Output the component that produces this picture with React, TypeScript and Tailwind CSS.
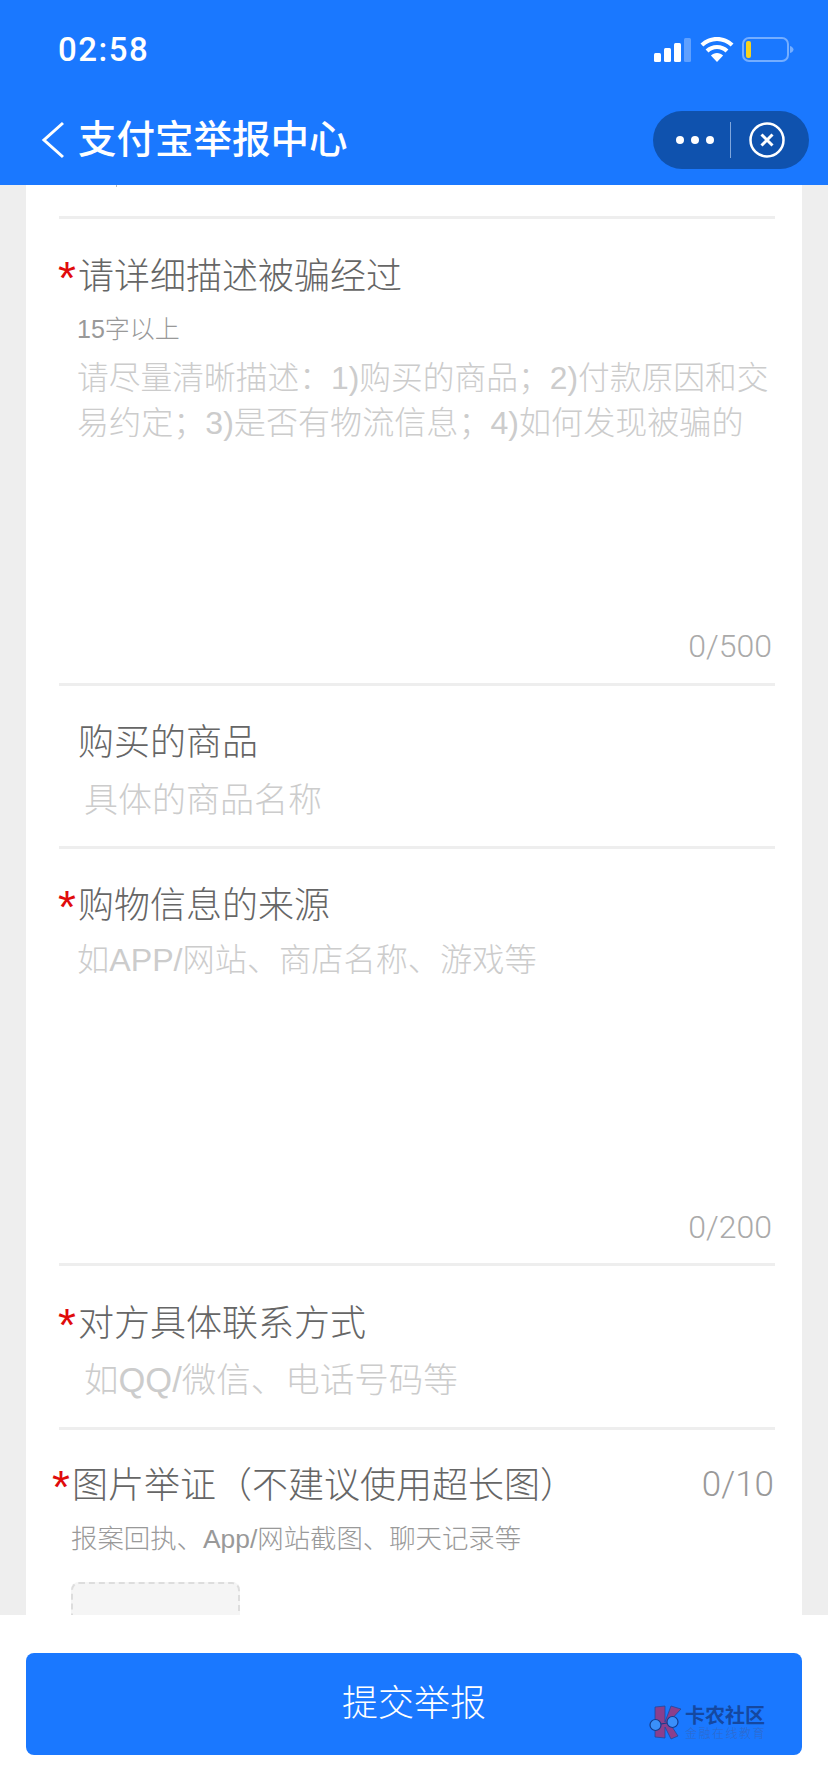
import React from "react";

const FONT = "font-['Liberation_Sans','Noto_Sans_CJK_SC',sans-serif]";

const Divider = () => <div className="h-[3px] bg-[#eeeeee]" />;

const Title: React.FC<{ text: string; required?: boolean }> = ({ text, required }) => (
  <h2 className="flex h-[44px] pl-[19px] text-[36px] leading-[44px] font-light text-[#666666]">
    <span className="relative">
      {required && <span className="absolute left-[-20px] top-[1px] text-[46px] leading-[44px] text-[#e00b0b]">*</span>}
      {text}
    </span>
  </h2>
);

const Counter: React.FC<{ text: string }> = ({ text }) => (
  <div className="pr-[3px] text-right font-['Roboto'] text-[32px] leading-[36px] font-light text-[#aaaaaa]">{text}</div>
);

const StatusIcons = () => (
  <div className="flex items-center">
    <svg width="38" height="24" viewBox="0 0 38 24" className="mr-[8px]">
      <rect x="0" y="15" width="7" height="9" rx="1.5" fill="#fff" />
      <rect x="10" y="10" width="7" height="14" rx="1.5" fill="#fff" />
      <rect x="20" y="5" width="7" height="19" rx="1.5" fill="#fff" />
      <rect x="30" y="0" width="7" height="24" rx="1.5" fill="#fff" fillOpacity="0.3" />
    </svg>
    <svg width="34" height="25" viewBox="0 0 34 25" className="mr-[8px]" fill="#fff">
      <path d="M17 0C10.6 0 4.8 2.5 .5 6.6l2.8 2.9C6.9 6.1 11.7 4 17 4s10.1 2.1 13.7 5.5l2.8-2.9C29.2 2.5 23.4 0 17 0z" />
      <path d="M17 8c-4.4 0-8.4 1.7-11.4 4.5l2.9 2.9C10.7 13.3 13.7 12 17 12s6.3 1.3 8.5 3.4l2.9-2.9C25.4 9.7 21.4 8 17 8z" />
      <path d="M17 16c-2.4 0-4.5.9-6.1 2.4L17 25l6.1-6.6C21.5 16.9 19.4 16 17 16z" />
    </svg>
    <svg width="52" height="25" viewBox="0 0 52 25">
      <rect x="1" y="1" width="45" height="23" rx="6" fill="none" stroke="#fff" strokeOpacity="0.4" strokeWidth="2" />
      <rect x="4" y="4" width="5" height="17" rx="2" fill="#f6d21f" />
      <path d="M48 9c2 .5 3.5 2 3.5 3.5S50 15.500 48 16z" fill="#fff" fillOpacity="0.4" />
    </svg>
  </div>
);

const Capsule = () => (
  <div className="flex h-[58px] w-[156px] items-center rounded-[29px] bg-[#0f52ae]">
    <div className="flex w-[61px] justify-end gap-[7px]">
      <span className="h-[8px] w-[8px] rounded-full bg-white" />
      <span className="h-[8px] w-[8px] rounded-full bg-white" />
      <span className="h-[8px] w-[8px] rounded-full bg-white" />
    </div>
    <div className="ml-[16px] h-[36px] w-px bg-[#7fa6dc]" />
    <svg width="36" height="36" viewBox="0 0 36 36" className="ml-[18px]" fill="none" stroke="#fff">
      <circle cx="18" cy="18" r="16.500" strokeWidth="2.500" />
      <path d="M12.500 12.500l11 11M23.500 12.500l-11 11" strokeWidth="3" />
    </svg>
  </div>
);

const Watermark = () => (
  <div className="absolute left-[622px] top-[52px] flex items-start">
    <svg width="36" height="36" viewBox="0 0 36 36" className="mt-[-1px]">
      <path d="M7 3l10-1v16l6-16 10 3-12 13 9 14-7 3-6-12v11l-10-1z" fill="#8b3f8c" stroke="#1c4a9e" strokeWidth="0.800" />
      <circle cx="7.500" cy="21" r="5.500" fill="#3a8ffa" stroke="#143c8c" strokeWidth="1.200" />
      <circle cx="24.500" cy="18" r="5.500" fill="#3a8ffa" stroke="#143c8c" strokeWidth="1.200" />
      <path d="M13 20l6-1" stroke="#143c8c" strokeWidth="1.200" />
    </svg>
    <div className="ml-[1px] flex flex-col">
      <span className="text-[20px] leading-[22px] font-bold text-[#1548a0]">卡农社区</span>
      <span className="text-[12px] leading-[14px] tracking-[1.500px] text-[#2f69cc]">金融在线教育</span>
    </div>
  </div>
);

export default function App() {
  return (
    <div className={`flex h-[1792px] w-[828px] flex-col overflow-hidden bg-white ${FONT}`}>
      <header className="h-[185px] shrink-0 bg-[#1a78ff] text-white">
        <div className="flex h-[100px] items-start justify-between pl-[58px] pr-[34px] pt-[28px]">
          <span className="font-['Roboto'] text-[33px] leading-[44px] font-medium tracking-[1.500px]">02:58</span>
          <div className="pt-[9px]">
            <StatusIcons />
          </div>
        </div>
        <div className="flex items-start justify-between pl-[40px] pr-[19px] pt-[11px]">
          <div className="flex items-center">
            <svg width="26" height="38" viewBox="0 0 26 38" fill="none" stroke="#fff" strokeWidth="3">
              <path d="M23 2L4 19l19 17" />
            </svg>
            <span className="ml-[12px] text-[38.500px] leading-[58px] font-medium">支付宝举报中心</span>
          </div>
          <Capsule />
        </div>
      </header>

      <main className="min-h-0 flex-1 overflow-hidden bg-[#eeeeee] px-[26px]">
        <div className="bg-white pl-[33px] pr-[27px]">
          <div className="h-[31px]">
            <div className="ml-[57px] h-[2px] w-px bg-[#bbbbbb]" />
          </div>
          <Divider />

          <div className="h-[464px] pt-[36px]">
            <Title text="请详细描述被骗经过" required />
            <p className="mt-[15px] pl-[18px] text-[25px] leading-[30px] font-light text-[#999999]">15字以上</p>
            <p className="mt-[12px] pl-[18px] leading-[45px] font-light text-[#cccccc]">
              <span className="block whitespace-nowrap text-[31.750px]">请尽量清晰描述：1)购买的商品；2)付款原因和交</span>
              <span className="block whitespace-nowrap text-[32.100px]">易约定；3)是否有物流信息；4)如何发现被骗的</span>
            </p>
            <div className="mt-[182px]">
              <Counter text="0/500" />
            </div>
          </div>
          <Divider />

          <div className="h-[160px] pt-[35px]">
            <Title text="购买的商品" />
            <p className="mt-[13px] pl-[25px] text-[34px] leading-[44px] font-light text-[#cccccc]">具体的商品名称</p>
          </div>
          <Divider />

          <div className="h-[414px] pt-[35px]">
            <Title text="购物信息的来源" required />
            <p className="mt-[10px] pl-[18px] text-[32.200px] leading-[44px] font-light text-[#cccccc]">如APP/网站、商店名称、游戏等</p>
            <div className="mt-[227px]">
              <Counter text="0/200" />
            </div>
          </div>
          <Divider />

          <div className="h-[161px] pt-[36px]">
            <Title text="对方具体联系方式" required />
            <p className="mt-[12px] pl-[25px] text-[34.500px] leading-[44px] font-light text-[#cccccc]">如QQ/微信、电话号码等</p>
          </div>
          <Divider />

          <div className="pt-[34px]">
            <div className="flex items-center justify-between pr-[1px]">
              <div className="ml-[-6px]">
                <Title text="图片举证（不建议使用超长图）" required />
              </div>
              <span className="mt-[-3px] font-['Roboto'] text-[35px] leading-[44px] font-light text-[#999999]">0/10</span>
            </div>
            <p className="mt-[14px] pl-[12px] text-[26.400px] leading-[34px] font-light text-[#999999]">报案回执、App/网站截图、聊天记录等</p>
            <div className="ml-[12px] mt-[26px] h-[100px] w-[169px] rounded-[8px] border-2 border-dashed border-[#dddddd] bg-[#f5f5f5]" />
          </div>
        </div>
      </main>

      <footer className="h-[177px] shrink-0 bg-white px-[26px] pt-[38px]">
        <div className="relative flex h-[102px] items-center justify-center rounded-[8px] bg-[#1a78ff] text-[36px] font-light text-white">
          提交举报
          <Watermark />
        </div>
      </footer>
    </div>
  );
}
